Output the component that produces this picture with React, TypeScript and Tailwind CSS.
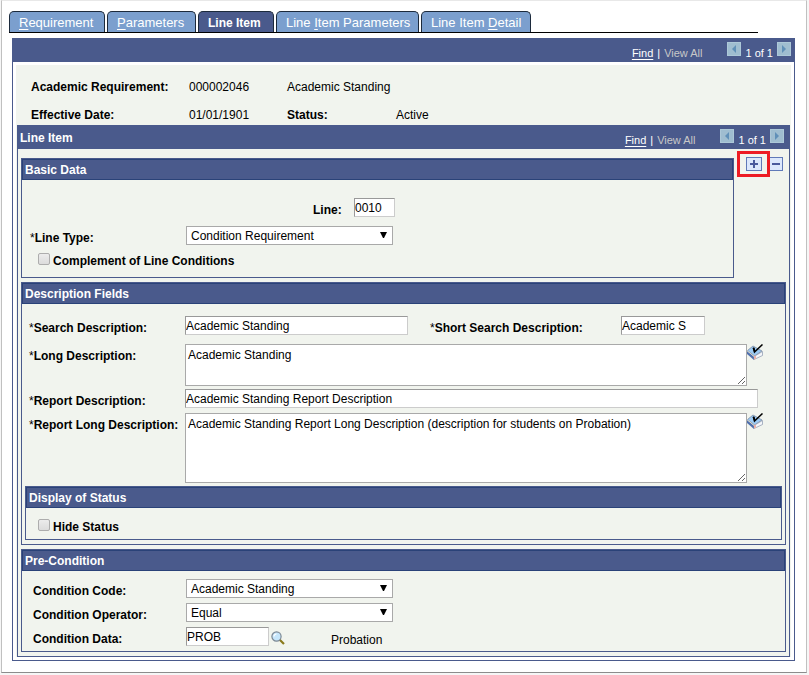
import type { ReactNode } from "react";

const PANEL = "border border-[#4a5a8c] bg-[#f1f4ee]";
const TEXT_INPUT =
  "h-[19px] border border-t-[#999] border-l-[#999] border-r-[#ccc] border-b-[#ccc] bg-white text-xs leading-4 outline-none";
const TEXT_AREA =
  "min-w-0 flex-1 resize border border-[#a9a9a9] bg-white px-[2px] py-[2px] text-xs leading-4 outline-none";

type Tab = { width: string; before?: string; hotkey?: string; after?: string; active?: boolean };

const TABS: Tab[] = [
  { width: "w-24", hotkey: "R", after: "equirement" },
  { width: "w-[89px]", hotkey: "P", after: "arameters" },
  { width: "w-[76px]", before: "Line Item", active: true },
  { width: "w-[143px]", before: "Line ", hotkey: "I", after: "tem Parameters" },
  { width: "w-[110px]", before: "Line Item ", hotkey: "D", after: "etail" },
];

function TabBar() {
  return (
    <nav className="mr-[48px] ml-[7px] flex gap-[2px] border-b border-black">
      {TABS.map((tab, i) => (
        <a
          key={i}
          href="#"
          className={`${tab.width} h-[21px] shrink-0 rounded-t-[5px] border border-b-0 border-[#1c2a3c] pl-[9px] leading-[22px] whitespace-pre text-white ${
            tab.active ? "bg-[#4a5a8c] text-xs font-bold" : "bg-[#7b9fce] text-[13px]"
          }`}
        >
          {tab.before}
          {tab.hotkey && <span className="underline underline-offset-2">{tab.hotkey}</span>}
          {tab.after}
        </a>
      ))}
    </nav>
  );
}

function ArrowButton({ dir }: { dir: "left" | "right" }) {
  return (
    <button
      type="button"
      aria-label={dir === "left" ? "Previous" : "Next"}
      className="flex size-[14px] items-center justify-center border border-[#adc8d8] bg-[#9fbdd0]"
    >
      <svg viewBox="0 0 12 12" className="size-3" fill="#6090b8">
        <path d={dir === "left" ? "M8 2v8L4 6z" : "M4 2v8l4-4z"} />
      </svg>
    </button>
  );
}

function Pager() {
  return (
    <div className="flex items-start text-[11px] leading-4 text-white">
      <div className="flex gap-1 pt-[6px]">
        <a href="#" className="underline underline-offset-2">
          Find
        </a>
        <span>|</span>
        <span className="text-[#c8c8c8]">View All</span>
      </div>
      <div className="ml-[25px] flex gap-1">
        <div className="pt-[3px]">
          <ArrowButton dir="left" />
        </div>
        <span className="pt-[6px]">1 of 1</span>
        <div className="pt-[3px]">
          <ArrowButton dir="right" />
        </div>
      </div>
    </div>
  );
}

function Section({ title, className = "", children }: { title: string; className?: string; children: ReactNode }) {
  return (
    <section className={`${PANEL} ${className}`}>
      <h2 className="h-[21px] border border-[#2a4278] bg-[#4a5a8c] pl-[2px] text-xs leading-5 font-bold text-white">
        {title}
      </h2>
      {children}
    </section>
  );
}

function Label({ htmlFor, required, className = "", children }: { htmlFor: string; required?: boolean; className?: string; children: ReactNode }) {
  return (
    <label htmlFor={htmlFor} className={`shrink-0 pt-1 text-xs leading-4 font-bold ${className}`}>
      {required && <span className="font-normal">*</span>}
      {children}
    </label>
  );
}

function Select({ id, value }: { id: string; value: string }) {
  return (
    <div className="relative h-[19px] w-[207px]">
      <select
        id={id}
        className="block h-[19px] w-full appearance-none border border-[#a9a9a9] bg-white pl-1 text-xs leading-4 outline-none"
      >
        <option>{value}</option>
      </select>
      <svg viewBox="0 0 7 6" className="pointer-events-none absolute top-[6px] right-[6px] h-[6px] w-[7px]">
        <path d="M0 0h7L4 6H3z" />
      </svg>
    </div>
  );
}

function CheckBox({ id, children }: { id: string; children: ReactNode }) {
  return (
    <div className="flex gap-[3px] pl-4">
      <input
        id={id}
        type="checkbox"
        className="size-3 appearance-none rounded-[2px] border border-[#adadad] bg-linear-to-b from-[#ececec] to-[#dcdcdc]"
      />
      <label htmlFor={id} className="text-xs leading-4 font-bold">
        {children}
      </label>
    </div>
  );
}

function SpellCheckButton() {
  return (
    <button type="button" aria-label="Spell check" className="mr-[22px] size-4 shrink-0">
      <svg viewBox="0 0 16 16" className="size-4">
        <path d="M.5 6.500L6 2l9 5-7.500 5z" fill="#9ccbf5" stroke="#7d8ba3" strokeWidth=".8" />
        <path d="M0 7v3l7 6v-3.500z" fill="#4f6fae" />
        <path d="M7 12.500v3l8.500-4V7.500z" fill="#f4f6fa" stroke="#8a97ad" strokeWidth=".7" />
        <path d="M7 12.500l2-1v3l-2 1z" fill="#eeb0a8" />
        <path d="M.5 7l6.500 5.500" stroke="#e4e0c8" strokeWidth=".8" />
        <path d="M6.500 3.500L7.500 8 15.500 .5" fill="none" stroke="#000" strokeWidth="1.500" />
        <path d="M5.500 4h2l1 3-1.500 1z" />
      </svg>
    </button>
  );
}

function BasicData() {
  return (
    <Section title="Basic Data" className="mr-[52px] h-[120px]">
      <div className="flex pt-[18px] pl-[291px]">
        <Label htmlFor="line" className="w-[41px]">
          Line:
        </Label>
        <input id="line" defaultValue="0010" className={`${TEXT_INPUT} w-[41px]`} />
      </div>
      <div className="flex pt-2 pl-2">
        <Label htmlFor="line-type" required className="w-[156px]">
          Line Type:
        </Label>
        <Select id="line-type" value="Condition Requirement" />
      </div>
      <div className="pt-[7px]">
        <CheckBox id="complement">Complement of Line Conditions</CheckBox>
      </div>
    </Section>
  );
}

function DescriptionFields() {
  return (
    <Section title="Description Fields" className="mt-1">
      <div className="flex pt-3 pl-[7px]">
        <Label htmlFor="search-desc" required className="w-[156px]">
          Search Description:
        </Label>
        <input id="search-desc" defaultValue="Academic Standing" className={`${TEXT_INPUT} w-[223px]`} />
        <Label htmlFor="short-desc" required className="ml-[22px] w-[191px]">
          Short Search Description:
        </Label>
        <input id="short-desc" defaultValue="Academic S" className={`${TEXT_INPUT} w-[84px]`} />
      </div>
      <div className="flex pt-2 pl-[7px]">
        <Label htmlFor="long-desc" required className="w-[156px]">
          Long Description:
        </Label>
        <textarea id="long-desc" defaultValue="Academic Standing" className={`${TEXT_AREA} h-[42px]`} />
        <SpellCheckButton />
      </div>
      <div className="flex pt-[3px] pr-[27px] pl-[7px]">
        <Label htmlFor="report-desc" required className="w-[156px]">
          Report Description:
        </Label>
        <input
          id="report-desc"
          defaultValue="Academic Standing Report Description"
          className={`${TEXT_INPUT} min-w-0 flex-1`}
        />
      </div>
      <div className="flex pt-1 pl-[7px]">
        <Label htmlFor="report-long-desc" required className="w-[156px]">
          Report Long Description:
        </Label>
        <textarea
          id="report-long-desc"
          defaultValue="Academic Standing Report Long Description (description for students on Probation)"
          className={`${TEXT_AREA} h-[70px]`}
        />
        <SpellCheckButton />
      </div>
      <Section title="Display of Status" className="mx-[3px] mt-[3px] mb-1 h-[54px]">
        <div className="-ml-1 pt-[11px]">
          <CheckBox id="hide-status">Hide Status</CheckBox>
        </div>
      </Section>
    </Section>
  );
}

function PreCondition() {
  return (
    <Section title="Pre-Condition" className="mt-1 h-[103px]">
      <div className="flex flex-col gap-1 pt-2 pl-[11px]">
        <div className="flex">
          <Label htmlFor="cond-code" className="w-[153px]">
            Condition Code:
          </Label>
          <Select id="cond-code" value="Academic Standing" />
        </div>
        <div className="flex">
          <Label htmlFor="cond-op" className="w-[153px]">
            Condition Operator:
          </Label>
          <Select id="cond-op" value="Equal" />
        </div>
        <div className="flex">
          <Label htmlFor="cond-data" className="w-[153px]">
            Condition Data:
          </Label>
          <input id="cond-data" defaultValue="PROB" className={`${TEXT_INPUT} w-[83px]`} />
          <button type="button" aria-label="Look up" className="mt-1 ml-[2px] size-[14px]">
            <svg viewBox="0 0 14 14" className="size-[14px]">
              <path d="M8.500 8.500l4.500 4.500" stroke="#8a7a1c" strokeWidth="2.200" />
              <circle cx="5.500" cy="5.500" r="4.600" fill="#c6e6fb" stroke="#7b8794" strokeWidth="1.200" />
              <path d="M3 5.500a2.500 2.500 0 0 1 2.500-2.500" fill="none" stroke="#fff" strokeWidth="1.200" />
            </svg>
          </button>
          <span className="pt-[5px] pl-[46px] text-xs leading-4">Probation</span>
        </div>
      </div>
    </Section>
  );
}

export default function App() {
  return (
    <div className="bg-[#f6f6f6] pr-[2px] pb-[2px] pl-px font-['Liberation_Sans',Arial,sans-serif] text-black">
      <main className="border border-t-[#e8e8e8] border-r-[#c0c0c0] border-b-[#8c8c8c] border-l-[#c0c0c0] bg-white pt-[10px] pb-[11px]">
        <TabBar />

        <div className="mt-[5px] mr-[11px] ml-[10px] border border-[#4a5a8c]">
          <header className="flex h-[23px] justify-end bg-[#4a5a8c] pr-[3px]">
            <Pager />
          </header>

          <div className="m-[3px] bg-[#f1f4ee]">
            {/* Requirement summary */}
            <dl className="grid grid-cols-[158px_98px_109px_1fr] gap-y-3 pt-[14px] pb-[2px] pl-[15px] text-xs leading-4">
              <dt className="font-bold">Academic Requirement:</dt>
              <dd>000002046</dd>
              <dd className="col-span-2">Academic Standing</dd>
              <dt className="font-bold">Effective Date:</dt>
              <dd>01/01/1901</dd>
              <dt className="font-bold">Status:</dt>
              <dd>Active</dd>
            </dl>

            <section className="mx-px border border-[#4a5a8c]">
              <header className="flex h-[23px] justify-between bg-[#4a5a8c] pr-[5px] pl-[2px]">
                <h1 className="text-xs leading-6 font-bold text-white">Line Item</h1>
                <Pager />
              </header>

              <div className="relative px-[3px] pt-[9px] pb-1">
                {/* Row add / delete */}
                <div className="absolute top-[2px] right-[6px] flex items-center">
                  <div className="z-10 flex h-[26px] w-[33px] items-center justify-center border-3 border-[#ed1c24]">
                    <button
                      type="button"
                      aria-label="Add row"
                      className="flex h-[14px] w-4 items-center justify-center border border-[#6079b8] bg-[#dce8fc]"
                    >
                      <svg viewBox="0 0 8 8" className="size-2">
                        <path d="M4 0v8M0 4h8" stroke="#4a5a9c" strokeWidth="2" />
                      </svg>
                    </button>
                  </div>
                  <button
                    type="button"
                    aria-label="Delete row"
                    className="flex h-[14px] w-[13px] items-center justify-center border border-l-0 border-[#6079b8] bg-[#dce8fc]"
                  >
                    <svg viewBox="0 0 8 8" className="size-2">
                      <path d="M0 4h8" stroke="#4a5a9c" strokeWidth="2" />
                    </svg>
                  </button>
                </div>

                <BasicData />
                <DescriptionFields />
                <PreCondition />
              </div>
            </section>
          </div>
        </div>
      </main>
    </div>
  );
}
